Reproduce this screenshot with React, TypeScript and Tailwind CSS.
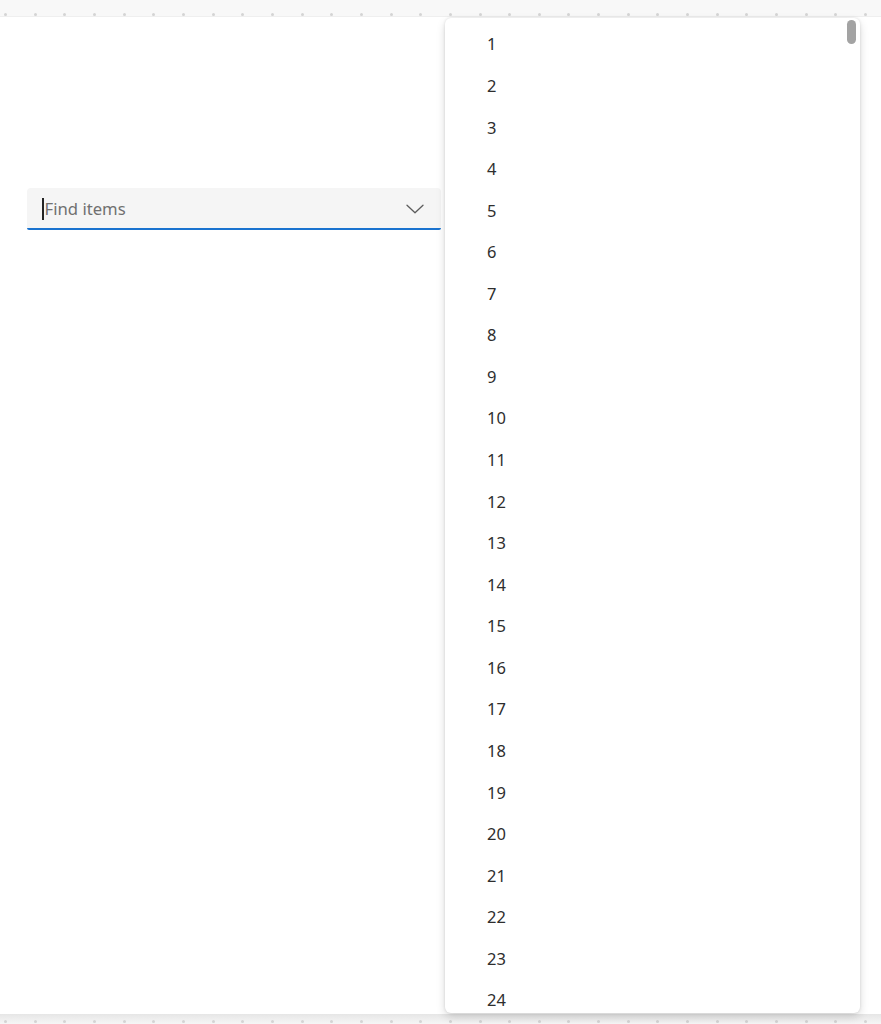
const items = Array.from({ length: 24 }, (_, i) => String(i + 1));
const dots = Array.from({ length: 30 }, (_, i) => i);

function DotStrip() {
  return (
    <div className="flex items-start pl-[4px]">
      {dots.map((d) => (
        <div key={d} className="flex w-[29.67px] shrink-0">
          <span className="h-[3px] w-[3px] rounded-full bg-[#d4d4d4]" />
        </div>
      ))}
    </div>
  );
}

function Chevron() {
  return (
    <svg width="18" height="10" viewBox="0 0 18 10" fill="none" className="text-[#5c5c5c]">
      <path d="M1 1.2 L9 8.8 L17 1.2" stroke="currentColor" strokeWidth="1.3" strokeLinecap="round" strokeLinejoin="round" />
    </svg>
  );
}

export default function App() {
  return (
    <div className="relative h-[1024px] w-[881px] overflow-hidden bg-white font-['Noto_Sans',sans-serif] text-[#242424]">
      <div className="h-[17px] border-b border-[#efefef] bg-[#f8f8f8] pt-[13px]">
        <DotStrip />
      </div>

      <div className="h-[997px] pl-[27px] pt-[171px]">
        <div className="relative flex h-[42px] w-[414px] items-center rounded-[4px] bg-[#f5f5f5] pl-[15px] pr-[17px]">
          <span className="mr-[1px] h-[22px] w-[1.5px] bg-[#242424]" />
          <span className="flex-1 text-[16.7px] text-[#707070]">Find items</span>
          <Chevron />
          <div className="absolute bottom-0 left-0 right-0 h-[2px] rounded-b-[4px] bg-[#1a73cf]" />
        </div>
      </div>

      <div className="h-[10px] bg-gradient-to-b from-[#e6e6e6] to-[#f6f6f6] pt-[6px]">
        <DotStrip />
      </div>

      <div className="absolute left-[445px] top-[18px] h-[995px] w-[415px] overflow-hidden rounded-[6px] bg-white shadow-[0_0_3px_rgba(0,0,0,0.12),0_4px_10px_rgba(0,0,0,0.14)]">
        <div className="flex flex-col pt-[6px]">
          {items.map((it) => (
            <div key={it} className="flex h-[41.57px] shrink-0 items-center pl-[42px] text-[16.5px] text-[#2e2e2e]">
              {it}
            </div>
          ))}
        </div>
        <div className="absolute right-[4px] top-[2px] h-[24px] w-[9px] rounded-full bg-[#a3a3a3]" />
      </div>
    </div>
  );
}
